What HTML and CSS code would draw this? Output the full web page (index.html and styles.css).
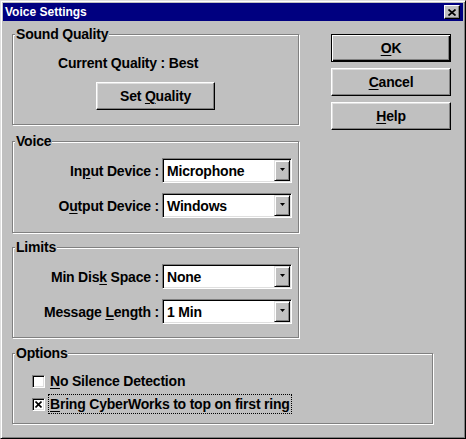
FILE: index.html
```html
<!DOCTYPE html>
<html>
<head>
<meta charset="utf-8">
<link rel="stylesheet" href="styles.css">
</head>
<body>
<div class="window">
  <div class="titlebar">
    <span class="title">Voice Settings</span>
    <span class="close"><svg width="8" height="7" viewBox="0 0 8 7"><path d="M0.5 0.5L7.5 6.5M7.5 0.5L0.5 6.5" stroke="#000" stroke-width="1.7" fill="none"/></svg></span>
  </div>
  <div class="body">
    <div class="left">
      <section class="group g-quality">
        <div class="legend">Sound Quality</div>
        <div class="quality-text">Current Quality : Best</div>
        <div class="btn btn-set"><span>Set <u>Q</u>uality</span></div>
      </section>
      <section class="group g-voice">
        <div class="legend">Voice</div>
        <div class="row">
          <span class="lbl">In<u>p</u>ut Device :</span>
          <div class="combo"><span class="value">Microphone</span><span class="arrow"><svg width="5" height="3" viewBox="0 0 5 3"><polygon points="0,0 5,0 2.5,3" fill="#000"/></svg></span></div>
        </div>
        <div class="row">
          <span class="lbl">O<u>u</u>tput Device :</span>
          <div class="combo"><span class="value">Windows</span><span class="arrow"><svg width="5" height="3" viewBox="0 0 5 3"><polygon points="0,0 5,0 2.5,3" fill="#000"/></svg></span></div>
        </div>
      </section>
      <section class="group g-limits">
        <div class="legend">Limits</div>
        <div class="row">
          <span class="lbl">Min Dis<u>k</u> Space :</span>
          <div class="combo"><span class="value">None</span><span class="arrow"><svg width="5" height="3" viewBox="0 0 5 3"><polygon points="0,0 5,0 2.5,3" fill="#000"/></svg></span></div>
        </div>
        <div class="row">
          <span class="lbl">Message <u>L</u>ength :</span>
          <div class="combo"><span class="value">1 Min</span><span class="arrow"><svg width="5" height="3" viewBox="0 0 5 3"><polygon points="0,0 5,0 2.5,3" fill="#000"/></svg></span></div>
        </div>
      </section>
    </div>
    <div class="right">
      <div class="btn btn-default"><span><u>O</u>K</span></div>
      <div class="btn"><span><u>C</u>ancel</span></div>
      <div class="btn"><span><u>H</u>elp</span></div>
    </div>
    <section class="group g-options">
      <div class="legend">Options</div>
      <div class="opt">
        <span class="cb"></span>
        <span class="opt-label"><u>N</u>o Silence Detection</span>
      </div>
      <div class="opt">
        <span class="cb"><svg width="7" height="7" viewBox="0 0 7 7"><path d="M0.5 0.5L6.5 6.5M6.5 0.5L0.5 6.5" stroke="#000" stroke-width="1.6" fill="none"/></svg></span>
        <span class="opt-label focus"><u>B</u>ring CyberWorks to top on first ring</span>
      </div>
    </section>
  </div>
</div>
</body>
</html>
```
FILE: styles.css
```css
html, body {
  margin: 0;
  padding: 0;
  background: #c0c0c0;
}
body {
  font-family: "Liberation Sans", Arial, sans-serif;
  font-weight: bold;
  font-size: 14px;
  letter-spacing: -0.2px;
  color: #000;
}
u {
  text-decoration-thickness: 1px;
  text-underline-offset: 2px;
}
.window {
  box-sizing: border-box;
  width: 466px;
  height: 439px;
  border: 1px solid;
  border-color: #dfdfdf #000 #000 #dfdfdf;
  box-shadow: inset 1px 1px #fff, inset -1px -1px #808080;
  padding: 2px;
  background: #c0c0c0;
}
.titlebar {
  height: 18px;
  background: #000080;
  color: #fff;
  display: flex;
  align-items: center;
  justify-content: space-between;
  padding: 0 3px 0 2px;
}
.title {
  font-size: 12px;
  letter-spacing: 0;
  line-height: 18px;
}
.close {
  box-sizing: border-box;
  width: 16px;
  height: 14px;
  background: #c0c0c0;
  border: 1px solid;
  border-color: #fff #000 #000 #fff;
  box-shadow: inset -1px -1px #808080;
  display: flex;
  align-items: center;
  justify-content: center;
}
.close svg { display: block; }
.body {
  display: grid;
  grid-template-columns: 287px 120px;
  column-gap: 32px;
  padding: 13px 0 0 9px;
  align-items: start;
}
.left {
  display: flex;
  flex-direction: column;
}
.group {
  box-sizing: border-box;
  border: 1px solid #808080;
  box-shadow: inset 1px 1px #fff, 1px 1px #fff;
  display: flex;
  flex-direction: column;
}
.legend {
  align-self: flex-start;
  margin: -9px 0 0 2px;
  padding: 0 1px;
  line-height: 16px;
  background: #c0c0c0;
}
.g-quality { height: 91px; }
.quality-text {
  margin: 13px 0 0 45px;
  line-height: 16px;
}
.btn {
  box-sizing: border-box;
  height: 28px;
  display: flex;
  align-items: center;
  justify-content: center;
  border: 1px solid;
  border-color: #fff #000 #000 #fff;
  box-shadow: inset -1px -1px #808080, inset 1px 1px #dfdfdf;
  background: #c0c0c0;
}
.btn-set {
  width: 119px;
  margin: 11px auto 0;
}
.btn-default {
  border-color: #000;
  box-shadow: inset 1px 1px #fff, inset -1px -1px #000, inset -2px -2px #808080;
}
.right {
  display: flex;
  flex-direction: column;
  gap: 6px;
}
.g-voice { height: 92px; margin-top: 16px; }
.g-limits { height: 91px; margin-top: 14px; }
.row {
  display: grid;
  grid-template-columns: 1fr 130px;
  column-gap: 3px;
  align-items: center;
  margin: 9px 6px 0 0;
}
.row + .row { margin-top: 10px; }
.lbl { text-align: right; }
.combo {
  box-sizing: border-box;
  height: 25px;
  display: flex;
  border: 1px solid;
  border-color: #808080 #fff #fff #808080;
  box-shadow: inset 1px 1px #000, inset -1px -1px #dfdfdf;
  background: #fff;
  padding: 1px;
}
.value {
  flex: 1;
  display: flex;
  align-items: center;
  padding-left: 3px;
}
.arrow {
  box-sizing: border-box;
  width: 16px;
  background: #c0c0c0;
  border: 1px solid;
  border-color: #dfdfdf #000 #000 #dfdfdf;
  box-shadow: inset 1px 1px #fff, inset -1px -1px #808080;
  display: flex;
  align-items: center;
  justify-content: center;
  padding-bottom: 2px;
}
.arrow svg { display: block; }
.g-options {
  grid-column: 1 / -1;
  width: 421px;
  height: 71px;
  margin-top: 15px;
}
.opt {
  display: flex;
  align-items: center;
  height: 20px;
  margin: 3px 0 0 19px;
}
.legend + .opt { margin-top: 10px; }
.cb {
  box-sizing: border-box;
  width: 13px;
  height: 13px;
  border: 1px solid;
  border-color: #808080 #fff #fff #808080;
  box-shadow: inset 1px 1px #000, inset -1px -1px #dfdfdf;
  background: #fff;
  display: flex;
  align-items: center;
  justify-content: center;
}
.cb svg { display: block; }
.opt-label {
  margin-left: 3px;
  padding: 0 1px;
  border: 1px dotted transparent;
  line-height: 18px;
}
.opt-label.focus { border-color: #000; }
```
